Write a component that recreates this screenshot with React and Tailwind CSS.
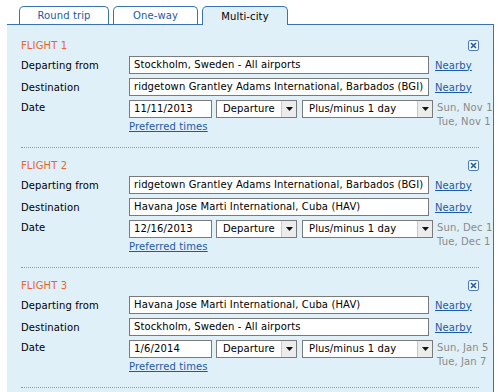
import React from "react";

const flights = [
  {
    n: 1,
    from: "Stockholm, Sweden - All airports",
    to: "ridgetown Grantley Adams International, Barbados (BGI)",
    date: "11/11/2013",
    early: "Sun, Nov 1",
    late: "Tue, Nov 1",
  },
  {
    n: 2,
    from: "ridgetown Grantley Adams International, Barbados (BGI)",
    to: "Havana Jose Marti International, Cuba (HAV)",
    date: "12/16/2013",
    early: "Sun, Dec 1",
    late: "Tue, Dec 1",
  },
  {
    n: 3,
    from: "Havana Jose Marti International, Cuba (HAV)",
    to: "Stockholm, Sweden - All airports",
    date: "1/6/2014",
    early: "Sun, Jan 5",
    late: "Tue, Jan 7",
  },
];

const Tab = ({ label, active, width }) => (
  <div
    className={`${width} border border-b-0 border-[#3a70b4] rounded-t-[5px] flex items-center justify-center ${
      active
        ? "h-[19px] -mb-px relative z-10 bg-[#e0f0f8] text-black"
        : "h-[18px] bg-white text-[#1c5aa6]"
    }`}
  >
    {label}
  </div>
);

const Select = ({ value, width }) => (
  <div className={`h-[18px] ${width} shrink-0 border border-[#7a7a7a] bg-white flex items-stretch`}>
    <div className="flex-1 pl-[6px] leading-[16px] whitespace-nowrap overflow-hidden">{value}</div>
    <div className="w-[15px] bg-[#ececec] border-l border-[#c8c8c8] flex items-center justify-center">
      <svg width="7" height="4" viewBox="0 0 7 4">
        <path d="M0 0h7L3.5 4z" fill="#111" />
      </svg>
    </div>
  </div>
);

const Input = ({ value, width }) => (
  <div className={`h-[18px] ${width} shrink-0 border border-[#7a7a7a] bg-white pl-[4px] leading-[16px] whitespace-nowrap overflow-hidden`}>
    {value}
  </div>
);

const CloseIcon = () => (
  <div className="w-[11px] h-[11px] rounded-[2px] border border-[#4a7cc0] bg-[#f2f8fc] flex items-center justify-center">
    <svg width="7" height="7" viewBox="0 0 7 7">
      <path d="M1 1l5 5M6 1L1 6" stroke="#2a5a9c" strokeWidth="1.6" />
    </svg>
  </div>
);

const Flight = ({ f }) => (
  <div className="px-[14px] pt-[10px]">
    <div className="pb-[13px] border-b border-dotted border-[#8a9aa8]">
      <div className="h-[14px] flex items-center justify-between">
        <span className="text-[#e8662c]">FLIGHT {f.n}</span>
        <CloseIcon />
      </div>
      <div className="mt-[4px] flex flex-col gap-[4px]">
        <div className="flex items-center">
          <div className="w-[108px] shrink-0">Departing from</div>
          <Input value={f.from} width="w-[300px]" />
          <a className="ml-[6px] text-[#1c5aa6] underline">Nearby</a>
        </div>
        <div className="flex items-center">
          <div className="w-[108px] shrink-0">Destination</div>
          <Input value={f.to} width="w-[300px]" />
          <a className="ml-[6px] text-[#1c5aa6] underline">Nearby</a>
        </div>
        <div className="flex items-start">
          <div className="w-[108px] shrink-0 leading-[16px]">Date</div>
          <div className="shrink-0">
            <div className="flex gap-[4px]">
              <Input value={f.date} width="w-[83px]" />
              <Select value="Departure" width="w-[81px]" />
              <Select value="Plus/minus 1 day" width="w-[131px] ml-[1px]" />
            </div>
            <a className="block mt-[2px] leading-[14px] text-[#1c5aa6] underline">Preferred times</a>
          </div>
          <div className="ml-[4px] text-[#8a8a8a] leading-[14px] whitespace-nowrap">
            <div className="mt-[1px]">{f.early}</div>
            <div>{f.late}</div>
          </div>
        </div>
      </div>
    </div>
  </div>
);

export default function App() {
  return (
    <div className="w-[498px] h-[392px] bg-white overflow-hidden text-[10px] tracking-[0.12px] text-black font-['DejaVu_Sans',sans-serif]">
      <div className="pt-[6px] pl-[19px] flex gap-[4px] items-end">
        <Tab label="Round trip" width="w-[90px]" />
        <Tab label="One-way" width="w-[85px]" />
        <Tab label="Multi-city" width="w-[86px]" active />
      </div>
      <div className="ml-[7px] w-[487px] h-[400px] bg-[#e0f0f8] border-t border-r border-[#3a70b4] overflow-hidden pt-[3px]">
        {flights.map((f) => (
          <Flight key={f.n} f={f} />
        ))}
      </div>
    </div>
  );
}
